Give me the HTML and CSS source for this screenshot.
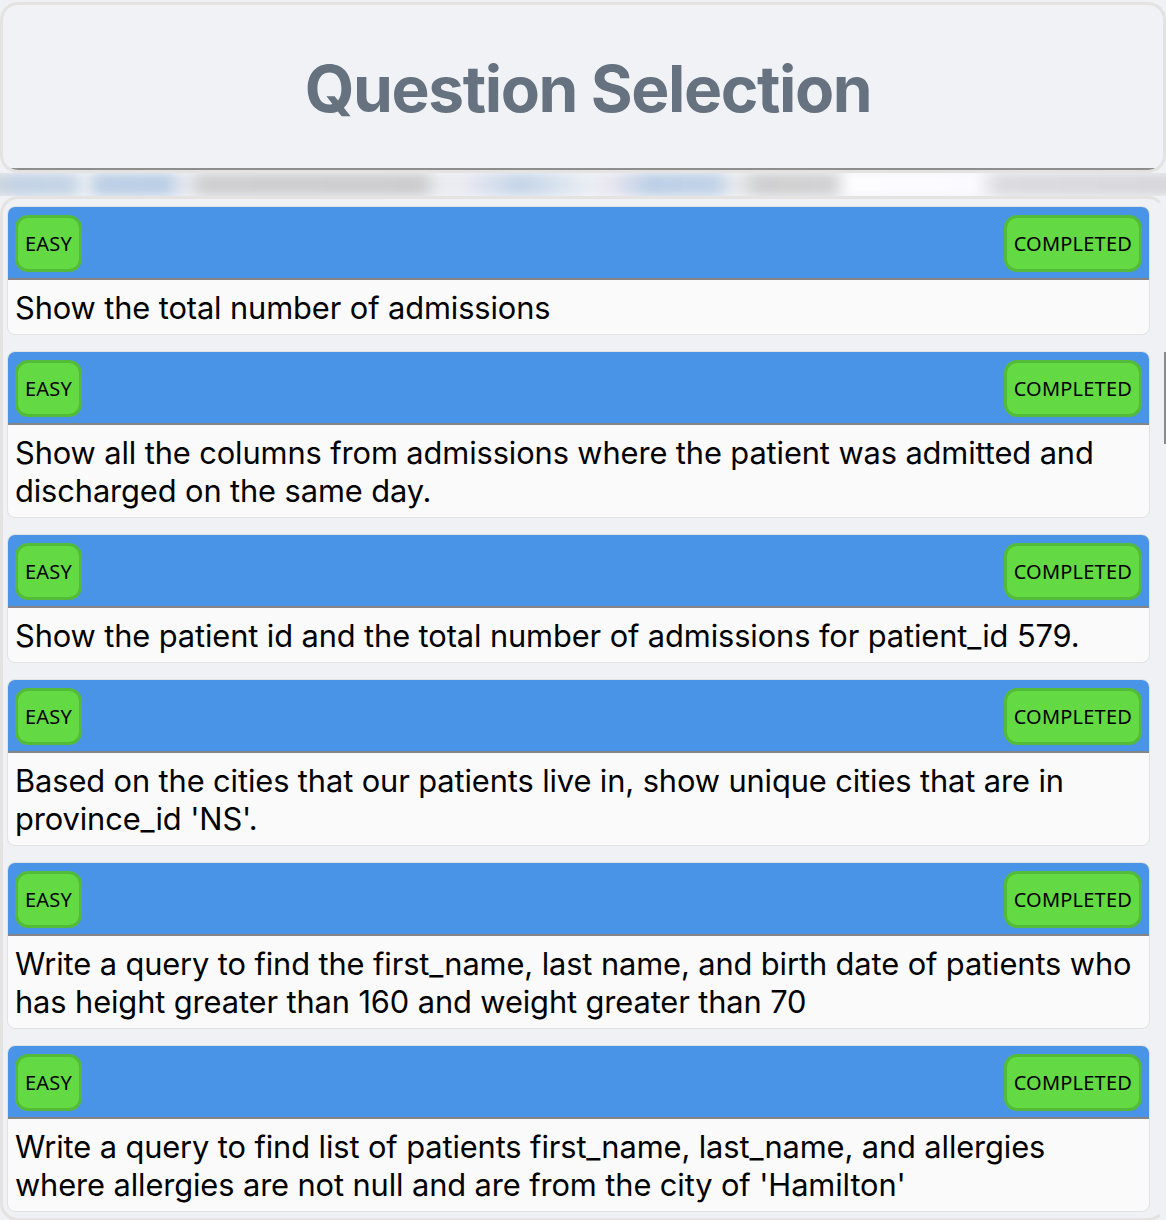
FILE: index.html
```html
<!DOCTYPE html>
<html>
<head>
<meta charset="utf-8">
<link rel="stylesheet" href="styles.css">
</head>
<body>
<div class="page">
  <header class="header">
    <div class="header-inner">
      <h1 class="title">Question Selection</h1>
    </div>
  </header>
  <div class="strip"><div class="strip-blur"></div></div>
  <main class="list">
    <div class="card">
      <div class="card-head"><span class="badge">EASY</span><span class="badge">COMPLETED</span></div>
      <div class="card-body">Show the total number of admissions</div>
    </div>
    <div class="card">
      <div class="card-head"><span class="badge">EASY</span><span class="badge">COMPLETED</span></div>
      <div class="card-body">Show all the columns from admissions where the patient was admitted and discharged on the same day.</div>
    </div>
    <div class="card">
      <div class="card-head"><span class="badge">EASY</span><span class="badge">COMPLETED</span></div>
      <div class="card-body">Show the patient id and the total number of admissions for patient_id 579.</div>
    </div>
    <div class="card">
      <div class="card-head"><span class="badge">EASY</span><span class="badge">COMPLETED</span></div>
      <div class="card-body">Based on the cities that our patients live in, show unique cities that are in province_id 'NS'.</div>
    </div>
    <div class="card">
      <div class="card-head"><span class="badge">EASY</span><span class="badge">COMPLETED</span></div>
      <div class="card-body">Write a query to find the first_name, last name, and birth date of patients who has height greater than 160 and weight greater than 70</div>
    </div>
    <div class="card">
      <div class="card-head"><span class="badge">EASY</span><span class="badge">COMPLETED</span></div>
      <div class="card-body">Write a query to find list of patients first_name, last_name, and allergies where allergies are not null and are from the city of 'Hamilton'</div>
    </div>
  </main>
  <div class="scroll-edge"></div>
</div>
</body>
</html>
```

FILE: styles.css
```css
html, body {
  margin: 0;
  padding: 0;
  background: #eff1f5;
}
body {
  font-family: Inter, "Noto Sans", sans-serif;
  overflow: hidden;
}
.page {
  position: relative;
  padding-top: 2px;
}
.header {
  border: 3px solid #e4e3e1;
  border-radius: 18px;
  background: #f0f2f5;
  overflow: hidden;
}
.header-inner {
  height: 163px;
  border-bottom: 2px solid #8e8e8e;
  display: flex;
  align-items: center;
  justify-content: center;
}
.title {
  margin: 0;
  font-family: Inter, sans-serif;
  font-weight: 700;
  font-size: 64px;
  color: #66727f;
  letter-spacing: -1.4px;
  padding-left: 10px;
  padding-top: 4px;
}
.strip {
  height: 23px;
  overflow: hidden;
  background: #f2f3f6;
}
.strip-blur {
  height: 100%;
  margin: 0 -10px;
  filter: blur(5px);
  background: linear-gradient(90deg,
    #d2d6dc 0px, #c3d3e6 30px, #c6d5e6 80px, #e8edf3 95px,
    #bed0e5 110px, #bccfe6 175px, #e6e9ee 195px,
    #d0d0d2 215px, #cdcdcf 430px, #eaecf0 450px,
    #ecebf3 470px, #c5d5e8 530px, #eaeef4 600px,
    #e9e6f0 620px, #bdd0e6 660px, #c2d3e8 725px, #e8ebee 745px,
    #d0d0d1 770px, #d2d2d4 840px, #fdfcff 860px, #fbfaff 985px,
    #dcdce0 1010px, #d8d8dc 1166px);
}
.list {
  border: 3px solid #e4e3e1;
  border-radius: 18px;
  border-right-color: transparent;
  padding: 7px 13px 6px 4px;
  display: flex;
  flex-direction: column;
  gap: 16px;
  background: #eff1f5;
}
.card {
  border: 1.5px solid #e2e2e2;
  border-radius: 8px;
  overflow: hidden;
  background: #fafafa;
}
.card-head {
  background: #4a94e8;
  height: 69px;
  padding: 2px 7px 0 7px;
  border-bottom: 2px solid #858585;
  display: flex;
  align-items: center;
  justify-content: space-between;
}
.badge {
  font-family: "Noto Sans", "Open Sans", sans-serif;
  font-size: 20px;
  color: #000;
  background: #63da44;
  border: 3px solid #54bb38;
  border-radius: 13px;
  height: 51px;
  padding: 0 7px;
  display: flex;
  align-items: center;
  letter-spacing: 0.2px;
}
.card-body {
  font-family: Inter, sans-serif;
  font-size: 30.8px;
  line-height: 38px;
  color: #000;
  padding: 9px 10px 7px 7px;
  letter-spacing: -0.1px;
}
.scroll-edge {
  position: absolute;
  right: 0;
  top: 352px;
  width: 2px;
  height: 92px;
  background: #8a8a8a;
}
```
